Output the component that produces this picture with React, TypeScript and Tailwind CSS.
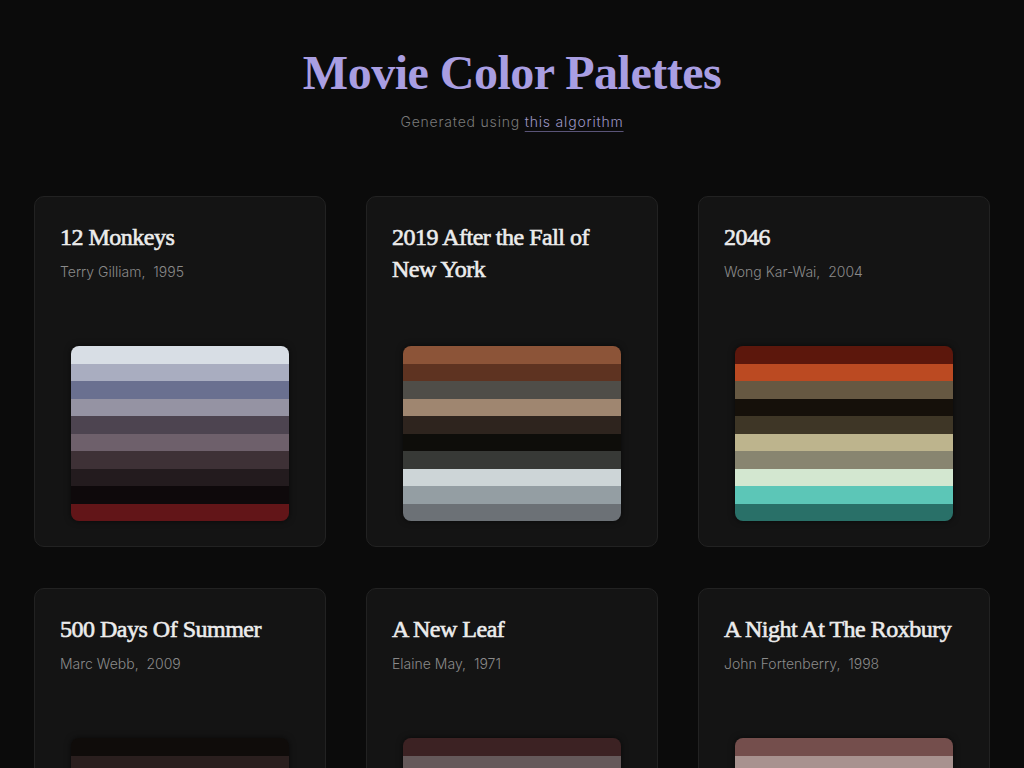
import React from "react";

type Movie = { title: string; sub?: string; colors: string[] };

const movies: Movie[] = [
  {
    title: "12 Monkeys",
    sub: "Terry Gilliam,  1995",
    colors: ["#d8dee5", "#a9adc0", "#6a7090", "#9593a3", "#4d4450", "#6e606b", "#3e3136", "#231b1e", "#0e090b", "#621518"],
  },
  {
    title: "2019 After the Fall of New York",
    colors: ["#8c5438", "#5e3321", "#4f4d48", "#9f8670", "#2e241e", "#0e0d0a", "#373936", "#cdd5d7", "#949ea3", "#6c7176"],
  },
  {
    title: "2046",
    sub: "Wong Kar-Wai,  2004",
    colors: ["#5c170c", "#bb4a22", "#665842", "#15100a", "#3e3626", "#bdb48d", "#888570", "#d3e7d0", "#5cc6b7", "#297068"],
  },
  {
    title: "500 Days Of Summer",
    sub: "Marc Webb,  2009",
    colors: ["#0f0c0a", "#2a1f1e", "#4a3b38", "#6b5a55", "#8e7c73", "#b3a79c", "#d4cbbf", "#7d8a8c", "#3d4a52", "#1e2328"],
  },
  {
    title: "A New Leaf",
    sub: "Elaine May,  1971",
    colors: ["#3c2223", "#65595a", "#8a7d78", "#a99c91", "#c8bdb0", "#6e6a5c", "#4a4538", "#2b2720", "#191612", "#0c0a08"],
  },
  {
    title: "A Night At The Roxbury",
    sub: "John Fortenberry,  1998",
    colors: ["#744e4c", "#a8928f", "#c9b7b1", "#8c7370", "#5a3e3c", "#3a2828", "#221818", "#6b5d63", "#9a8d95", "#d8ced2"],
  },
];

function Card({ m }: { m: Movie }) {
  return (
    <div className="flex h-[351px] flex-col rounded-[10px] border border-[#222222] bg-[#141414] px-[25px] pt-[24px] pb-[25px]">
      <h2
        className="text-[24px] leading-[32px] font-normal tracking-[-0.5px] text-[#ececec] [-webkit-text-stroke:0.6px_#ececec]"
        style={{ fontFamily: '"Liberation Serif", "DejaVu Serif", serif' }}
      >
        {m.title}
      </h2>
      {m.sub && (
        <p
          className="mt-[9px] text-[14px] leading-[20px] font-light text-[#8a8a8a] whitespace-pre"
          style={{ fontFamily: 'Inter, "Noto Sans", sans-serif' }}
        >
          {m.sub}
        </p>
      )}
      <div className="mt-auto mx-auto flex w-[218px] flex-col overflow-hidden rounded-[8px] shadow-[0_0_6px_rgba(0,0,0,0.6)]">
        {m.colors.map((c, i) => (
          <div key={i} className="h-[17.5px]" style={{ backgroundColor: c }} />
        ))}
      </div>
    </div>
  );
}

export default function App() {
  return (
    <div className="min-h-[768px] bg-[#0b0b0b] px-[34px] pb-10">
      <header className="flex flex-col items-center pt-[46px]">
        <h1
          className="text-[48px] leading-[54px] font-bold tracking-[-0.5px] text-[#a99ee2]"
          style={{ fontFamily: '"Liberation Serif", "DejaVu Serif", serif' }}
        >
          Movie Color Palettes
        </h1>
        <p
          className="mt-[12px] text-[14px] leading-[20px] font-light tracking-[0.8px] text-[#7a7a7a]"
          style={{ fontFamily: 'Inter, "Noto Sans", sans-serif' }}
        >
          Generated using{" "}
          <a href="#" className="text-[#9d97c4] underline decoration-[#5a5478] underline-offset-[4px]">
            this algorithm
          </a>
        </p>
      </header>
      <main className="mt-[64px] grid grid-cols-3 gap-x-[40px] gap-y-[41px]">
        {movies.map((m) => (
          <Card key={m.title} m={m} />
        ))}
      </main>
    </div>
  );
}
